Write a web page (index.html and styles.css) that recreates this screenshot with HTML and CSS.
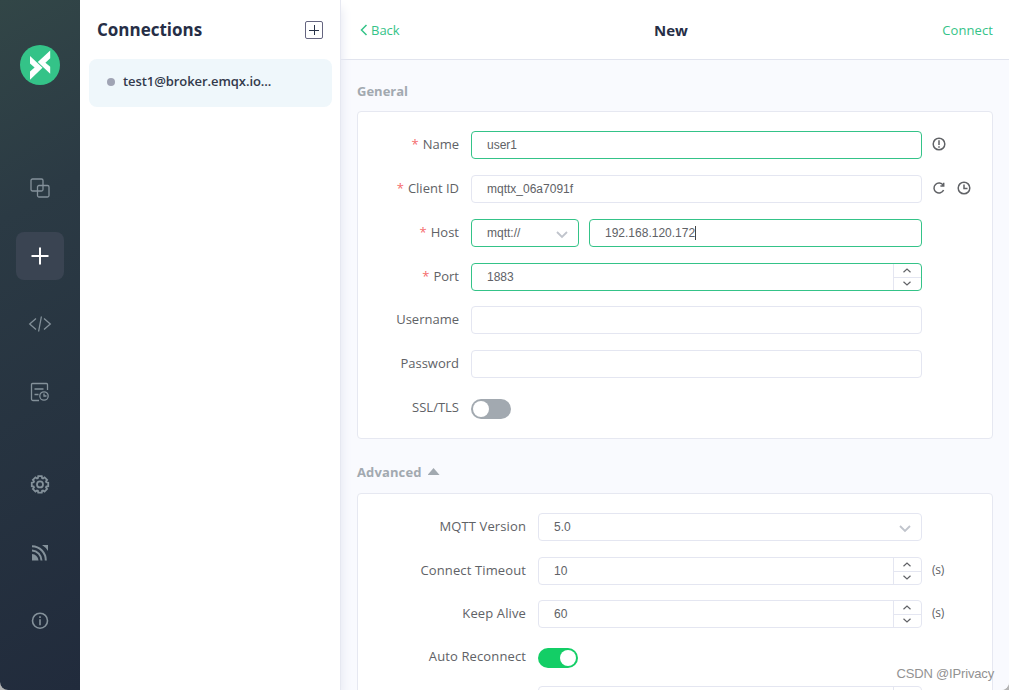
FILE: index.html
```html
<!DOCTYPE html>
<html lang="en">
<head>
    <meta charset="UTF-8">
    <meta name="viewport" content="width=device-width, initial-scale=1.0">
    <title>MQTTX</title>
    <link rel="stylesheet" href="styles.css">
</head>
<body>
    <div class="app">
        <!-- left menu -->
        <div class="leftbar">
            <svg class="logo" viewBox="0 0 40 40"><circle cx="20" cy="20" r="20" fill="#34c388"/><path fill="#fff" d="M10 11l12.500 11.700L10 34.800v-8.300l4.600-4L10 18.500zM30.200 5.500v7.700l-4.800 4.500 4.800 4v7L17.800 17z"/></svg>
            <div class="menu-top">
                <a class="menu-item"><svg viewBox="0 0 20 20"><rect x="1" y="1" width="12" height="12" rx="1.500"/><rect x="7.500" y="7.500" width="11.500" height="11.500" rx="1.500"/></svg></a>
                <a class="menu-item active"><svg viewBox="0 0 20 20"><path d="M1.500 10h17M10 1.500v17"/></svg></a>
                <a class="menu-item"><svg viewBox="0 0 20 20"><path d="M6 4.500L-.300 10 6 15.500M14 4.500l6.300 5.500L14 15.500M11.400 2.500L8.600 17.500"/></svg></a>
                <a class="menu-item"><svg viewBox="0 0 20 20"><path d="M9 18.500H3a1.500 1.500 0 0 1-1.500-1.500V2.500A1 1 0 0 1 2.500 1.500h14a1 1 0 0 1 1 1V8M4.500 7h9M4.500 12.500h4"/><circle cx="14" cy="14" r="4.200"/><path d="M14 11.500V14h2.500"/></svg></a>
            </div>
            <div class="menu-bottom">
                <a class="menu-item"><svg class="bold" viewBox="1 1.500 18 18"><path d="M8.100 4.300L8.400 2.600H11.600L11.900 4.300L12.700 4.600L14.100 3.600L16.400 5.900L15.400 7.300L15.700 8.100L17.400 8.400V11.600L15.700 11.900L15.400 12.700L16.400 14.100L14.100 16.400L12.700 15.400L11.900 15.700L11.600 17.400H8.400L8.100 15.700L7.300 15.400L5.900 16.400L3.600 14.100L4.600 12.700L4.300 11.900L2.600 11.600V8.400L4.300 8.100L4.600 7.300L3.600 5.900L5.900 3.600L7.300 4.600Z"/><circle cx="10" cy="10" r="2.700"/></svg></a>
                <a class="menu-item"><svg viewBox="0 0 20 20"><path class="fill" d="M2 11a7 7 0 0 1 6.500 6.500H2z"/><path class="thick" d="M2 7.500a10 10 0 0 1 9.500 10M2 3.200a14 14 0 0 1 13.800 14.300"/><path class="fill" d="M12 2h6v6a17 17 0 0 0-6-6z"/></svg></a>
                <a class="menu-item"><svg class="bold" viewBox="0 0 20 20"><circle cx="10" cy="9.700" r="7.500"/><path d="M10 8.200v6M10 5.200v1.700"/></svg></a>
            </div>
        </div>

        <!-- connections list -->
        <div class="connections">
            <div class="connections-header">
                <h1>Connections</h1>
                <svg class="new-btn" viewBox="0 0 18 18"><rect x=".5" y=".5" width="17" height="17" rx="1.500" fill="none" stroke="#656580"/><path d="M4 9.500h10M9.500 4v10" stroke="#283249" fill="none"/></svg>
            </div>
            <div class="connection-item">
                <span class="status"></span>
                <span class="connection-name">test1@broker.emqx.io...</span>
            </div>
        </div>

        <!-- new connection form -->
        <div class="main">
            <div class="topbar">
                <a class="back"><svg viewBox="0 0 8 12"><path d="M6.500 1L1.500 6l5 5"/></svg>Back</a>
                <h2>New</h2>
                <a class="connect">Connect</a>
            </div>
            <div class="content">
                <h3>General</h3>
                <div class="card general">
                    <div class="row">
                        <label class="required">Name</label>
                        <div class="field green">user1</div>
                        <div class="extra"><svg viewBox="0 0 14 14"><circle cx="7" cy="7" r="5.800"/><path d="M7 3.300v4.700M7 9.300v1.400"/></svg></div>
                    </div>
                    <div class="row">
                        <label class="required">Client ID</label>
                        <div class="field">mqttx_06a7091f</div>
                        <div class="extra">
                            <svg viewBox="0 0 14 14"><path d="M11.600 9a5 5 0 1 1-.4-4.700M11.700 1.800v3.300H8.400"/></svg>
                            <svg viewBox="0 0 14 14"><circle cx="7" cy="7" r="5.800"/><path d="M7 3.500V7.500h3.500"/></svg>
                        </div>
                    </div>
                    <div class="row">
                        <label class="required">Host</label>
                        <div class="field green protocol">mqtt://<svg class="arrow" viewBox="0 0 12 8"><path d="M1 1l5 5 5-5"/></svg></div>
                        <div class="field green">192.168.120.172<span class="caret"></span></div>
                    </div>
                    <div class="row">
                        <label class="required">Port</label>
                        <div class="field green number">1883
                            <div class="spin"><span><svg viewBox="0 0 8 5"><path d="M.5 4.200L4 1l3.500 3.200"/></svg></span><span><svg viewBox="0 0 8 5"><path d="M.5 .8L4 4 7.500.8"/></svg></span></div>
                        </div>
                    </div>
                    <div class="row">
                        <label>Username</label>
                        <div class="field"></div>
                    </div>
                    <div class="row">
                        <label>Password</label>
                        <div class="field"></div>
                    </div>
                    <div class="row">
                        <label>SSL/TLS</label>
                        <span class="switch"></span>
                    </div>
                </div>

                <h3 class="advanced-title">Advanced <i class="triangle"></i></h3>
                <div class="card advanced">
                    <div class="row">
                        <label>MQTT Version</label>
                        <div class="field">5.0<svg class="arrow" viewBox="0 0 12 8"><path d="M1 1l5 5 5-5"/></svg></div>
                    </div>
                    <div class="row">
                        <label>Connect Timeout</label>
                        <div class="field number">10
                            <div class="spin"><span><svg viewBox="0 0 8 5"><path d="M.5 4.200L4 1l3.500 3.200"/></svg></span><span><svg viewBox="0 0 8 5"><path d="M.5 .8L4 4 7.500.8"/></svg></span></div>
                        </div>
                        <div class="extra">(s)</div>
                    </div>
                    <div class="row">
                        <label>Keep Alive</label>
                        <div class="field number">60
                            <div class="spin"><span><svg viewBox="0 0 8 5"><path d="M.5 4.200L4 1l3.500 3.200"/></svg></span><span><svg viewBox="0 0 8 5"><path d="M.5 .8L4 4 7.500.8"/></svg></span></div>
                        </div>
                        <div class="extra">(s)</div>
                    </div>
                    <div class="row">
                        <label>Auto Reconnect</label>
                        <span class="switch on"></span>
                    </div>
                    <div class="row">
                        <label></label>
                        <div class="field number"><div class="spin"><span></span><span></span></div></div>
                    </div>
                </div>
            </div>
        </div>
        <div class="watermark">CSDN @IPrivacy</div>
    </div>
</body>
</html>
```
FILE: styles.css
```css
* {
    box-sizing: border-box;
}
body {
    margin: 0;
    background: #b4b4b4;
    font-family: "Open Sans", sans-serif;
    font-size: 13px;
    color: #606266;
    overflow: hidden;
}
h1, h2, h3 {
    margin: 0;
}
svg {
    display: block;
    fill: none;
    flex: none;
}
.app {
    position: relative;
    display: flex;
    height: 690px;
    overflow: hidden;
    border-radius: 0 0 8px 8px;
    background: #fff;
}

/* left menu */
.leftbar {
    position: relative;
    z-index: 2;
    width: 80px;
    flex: none;
    display: flex;
    flex-direction: column;
    align-items: center;
    padding: 45px 0 45px;
    background: linear-gradient(150deg, #324647 0%, #2b3a44 30%, #212b3c 100%);
}
.logo {
    width: 40px;
    height: 40px;
}
.menu-top, .menu-bottom {
    display: flex;
    flex-direction: column;
    gap: 20px;
}
.menu-top {
    margin-top: 79px;
}
.menu-bottom {
    margin-top: auto;
}
.menu-item {
    width: 48px;
    height: 48px;
    border-radius: 8px;
    display: flex;
    align-items: center;
    justify-content: center;
}
.menu-item svg {
    width: 20px;
    height: 20px;
    overflow: visible;
    stroke: #84919a;
    stroke-width: 1.3;
}
.menu-item .bold {
    stroke-width: 1.6;
}
.menu-item .fill {
    fill: #84919a;
    stroke: none;
}
.menu-item .thick {
    stroke-width: 2;
}
.menu-item.active {
    background: #3a4452;
}
.menu-item.active svg {
    stroke: #fff;
    stroke-width: 2;
}

/* connections */
.connections {
    position: relative;
    z-index: 1;
    width: 261px;
    flex: none;
    background: #fff;
    border-right: 1px solid #e6e8f1;
    box-shadow: 1px 8px 10px 0 #e6e8f1;
}
.connections-header {
    display: flex;
    align-items: center;
    justify-content: space-between;
    height: 59px;
    padding: 0 17px;
}
.connections-header h1 {
    font-size: 17px;
    line-height: 24px;
    color: #262e46;
}
.new-btn {
    width: 18px;
    height: 18px;
}
.connection-item {
    display: flex;
    align-items: center;
    height: 48px;
    margin: 0 8px 0 9px;
    padding: 0 18px 4px;
    border-radius: 8px;
    background: #eff7fb;
}
.status {
    width: 8px;
    height: 8px;
    margin: 2px 8px 0 0;
    border-radius: 50%;
    background: #a0a4b4;
}
.connection-name {
    font-weight: 600;
    letter-spacing: -0.07px;
    color: #333a4c;
}

/* form */
.main {
    flex: 1;
    min-width: 0;
    background: #f9fafe;
}
.topbar {
    display: grid;
    grid-template-columns: 1fr auto 1fr;
    align-items: center;
    height: 60px;
    padding: 0 16px 0 19px;
    border-bottom: 1px solid #e1e4ee;
    background: #fff;
}
.topbar h2 {
    margin-right: 11px;
    font-size: 15px;
    line-height: 22px;
    color: #262e46;
}
.back, .connect {
    color: #34c388;
}
.back {
    display: flex;
    align-items: center;
    gap: 3px;
}
.back svg {
    width: 8px;
    height: 12px;
    stroke: #34c388;
    stroke-width: 1.5;
}
.connect {
    text-align: right;
    letter-spacing: 0.1px;
}
.content {
    padding: 21px 16px 0;
}
.content h3 {
    font-size: 13px;
    line-height: 20px;
    height: 30px;
    color: #a2a9b0;
}
.card {
    border: 1px solid #e6e8f1;
    border-radius: 4px;
    background: #fff;
}
.general {
    height: 328px;
    padding-top: 19.2px;
}
.advanced {
    height: 330px;
    padding-top: 19.4px;
}
.content .advanced-title {
    display: flex;
    gap: 6px;
    height: 54px;
    padding-top: 23px;
    letter-spacing: 0.12px;
}
.triangle {
    width: 12px;
    height: 7px;
    margin-top: 6px;
    background: #a2a9b0;
    clip-path: polygon(50% 0, 100% 100%, 0 100%);
}
.row {
    position: relative;
    display: flex;
    height: 43.8px;
    padding-right: 70px;
}
.advanced .row {
    height: 43.2px;
}
.row label {
    width: 101px;
    flex: none;
    line-height: 26px;
    text-align: right;
}
.advanced label {
    width: 168px;
    letter-spacing: 0.12px;
}
.required::before {
    content: "*";
    margin-right: 4px;
    color: #f56c6c;
}
.field {
    display: flex;
    align-items: center;
    flex: 1;
    height: 28px;
    margin-left: 12px;
    padding: 0 15px;
    border: 1px solid #e4e6f1;
    border-radius: 4px;
    background: #fff;
    font-family: "Liberation Sans", Arial, sans-serif;
    font-size: 12px;
}
.field.green {
    border-color: #34c388;
}
.field.protocol {
    flex: none;
    width: 108px;
}
.protocol + .field {
    margin-left: 10px;
}
.arrow {
    width: 12px;
    height: 8px;
    margin: 4px -5px 0 auto;
    stroke: #c0c4cc;
    stroke-width: 1.8;
}
.caret {
    width: 1px;
    height: 14px;
    background: #444;
}
.number {
    padding-right: 0;
}
.spin {
    display: flex;
    flex-direction: column;
    width: 28px;
    height: 26px;
    margin-left: auto;
    border-left: 1px solid #e4e6f1;
}
.spin span {
    height: 12px;
    padding-right: 1px;
    display: flex;
    align-items: center;
    justify-content: center;
}
.spin span:first-child {
    height: 14px;
    padding-top: 1px;
    border-bottom: 1px solid #e4e6f1;
}
.spin svg {
    width: 8px;
    height: 5px;
    stroke: #606266;
    stroke-width: 1.2;
}
/* icons and units sit in the right gutter of the card */
.extra {
    display: flex;
    gap: 11px;
    flex: none;
    width: 60px;
    margin-right: -70px;
    padding-left: 10px;
    font-size: 12px;
    line-height: 26px;
    box-sizing: content-box;
    letter-spacing: -0.2px;
}
.extra svg {
    width: 14px;
    height: 14px;
    margin-top: 6px;
    stroke: #606266;
    stroke-width: 1.5;
}
.switch {
    width: 40px;
    height: 20px;
    margin: 5px 0 0 12px;
    padding: 2px;
    border-radius: 10px;
    background: #a2a9b0;
}
.switch::before {
    content: "";
    display: block;
    width: 16px;
    height: 16px;
    border-radius: 50%;
    background: #fff;
}
.switch.on {
    background: #13ce66;
}
.switch.on::before {
    margin-left: auto;
}
.watermark {
    position: absolute;
    z-index: 2;
    right: 15px;
    bottom: 8px;
    font-family: "Liberation Sans", Arial, sans-serif;
    font-size: 13px;
    letter-spacing: -0.17px;
    line-height: 16px;
    color: #929292;
}
```
